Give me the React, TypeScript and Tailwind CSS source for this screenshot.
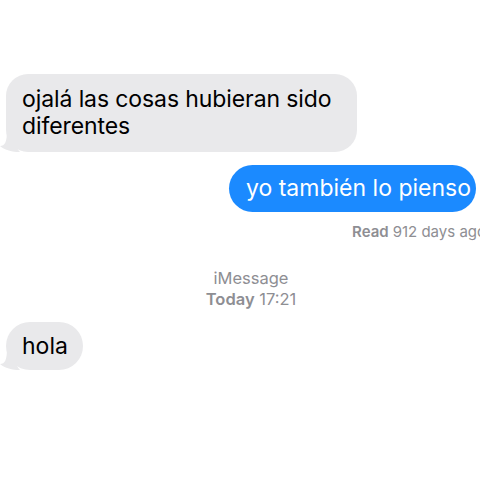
import React from "react";

function TailLeft({ color }: { color: string }) {
  return (
    <svg className="absolute left-[-6px] bottom-0" width="20" height="22" viewBox="0 0 20 22">
      <path d="M16 0 L16 12 C16 17 18 20 20 22 C12 22 5 20 0 16 C5 16 7 12 7 0 Z" fill={color} />
    </svg>
  );
}

export default function App() {
  return (
    <div
      className="w-[480px] h-[480px] bg-white overflow-hidden relative"
      style={{ fontFamily: "Inter, 'Liberation Sans', sans-serif" }}
    >
      <div className="flex flex-col pt-[74px]">
        <div className="pl-[6px] flex">
          <div className="relative">
            <TailLeft color="#e9e9eb" />
            <div className="relative bg-[#e9e9eb] rounded-[22px] w-[351px] h-[78px] pl-[16px] pt-[12px] text-[23px] leading-[27px] text-black tracking-[-0.1px]">
              ojalá las cosas hubieran sido
              <br />
              diferentes
            </div>
          </div>
        </div>
        <div className="flex justify-end pr-[4px] mt-[13px]">
          <div className="bg-[#1b8aff] rounded-[24px] h-[47px] w-[247px] pl-[17px] pt-[10px] text-[23px] leading-[27px] text-white whitespace-nowrap">
            yo también lo pienso
          </div>
        </div>
        <div className="flex justify-end mr-[-6px] mt-[11px] text-[15px] leading-[18px] text-[#8e8e93] whitespace-nowrap">
          <span className="font-semibold">Read</span>
          <span className="ml-[4px]">912 days ago</span>
        </div>
        <div className="flex flex-col items-center pl-[22px] mt-[27px] text-[16.5px] leading-[21px] text-[#8e8e93]">
          <span>iMessage</span>
          <span>
            <span className="font-semibold">Today</span> 17:21
          </span>
        </div>
        <div className="pl-[6px] flex mt-[12px]">
          <div className="relative">
            <TailLeft color="#e9e9eb" />
            <div className="relative bg-[#e9e9eb] rounded-[24px] w-[77px] h-[48px] pl-[16px] pt-[11px] text-[23px] leading-[27px] text-black">
              hola
            </div>
          </div>
        </div>
      </div>
    </div>
  );
}
